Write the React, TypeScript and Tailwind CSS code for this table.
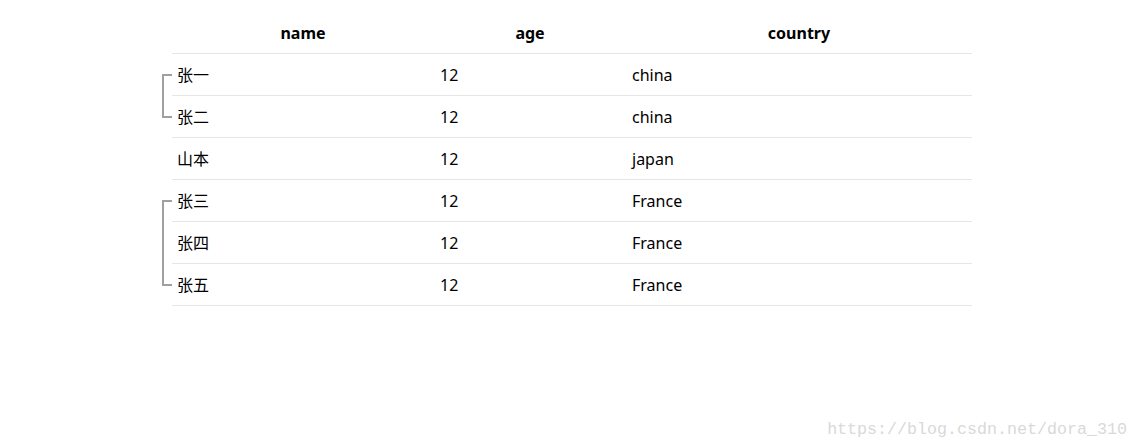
const rows = [
  { group: 1, name: '张一', age: 12, country: 'china' },
  { group: 1, name: '张二', age: 12, country: 'china' },
  { group: 2, name: '山本', age: 12, country: 'japan' },
  { group: 3, name: '张三', age: 12, country: 'France' },
  { group: 3, name: '张四', age: 12, country: 'France' },
  { group: 3, name: '张五', age: 12, country: 'France' },
];

const groups = [1, 2, 3].map((g) => rows.filter((r) => r.group === g));

const App = () => {
  return (
    <div
      className="relative h-[448px] w-[1138px] overflow-hidden bg-white text-black"
      style={{ fontFamily: '"Noto Sans", "Noto Sans CJK SC", sans-serif' }}
    >
      <div className="ml-[162px] pt-[12px]">
        {/* header */}
        <div className="ml-[10px] flex h-[42px] w-[800px] border-b border-[#e6e6e6] text-[16px] font-bold">
          <div className="flex w-[262px] items-center justify-center">name</div>
          <div className="flex w-[192px] items-center justify-center">age</div>
          <div className="flex w-[346px] items-center justify-center">country</div>
        </div>

        {groups.map((group, i) => (
          <div key={i} className="flex">
            <div className="flex w-[10px] flex-col">
              {group.length > 1 && (
                <div className="my-[20px] flex-1 border-y-2 border-l-2 border-[#a0a0a0]" />
              )}
            </div>
            <div>
              {group.map((r) => (
                <div key={r.name} className="flex h-[42px] w-[800px] border-b border-[#e6e6e6] text-[16px]">
                  <div className="flex w-[262px] items-center px-[5px]">{r.name}</div>
                  <div className="flex w-[192px] items-center px-[6px]">{r.age}</div>
                  <div className="flex w-[346px] items-center px-[6px]">{r.country}</div>
                </div>
              ))}
            </div>
          </div>
        ))}
      </div>

      {/* watermark */}
      <div
        className="absolute bottom-[6px] right-[11px] text-[16.67px] text-[#d9d9d9]"
        style={{ fontFamily: '"Liberation Mono", monospace' }}
      >
        https://blog.csdn.net/dora_310
      </div>
    </div>
  );
};

export default App;
